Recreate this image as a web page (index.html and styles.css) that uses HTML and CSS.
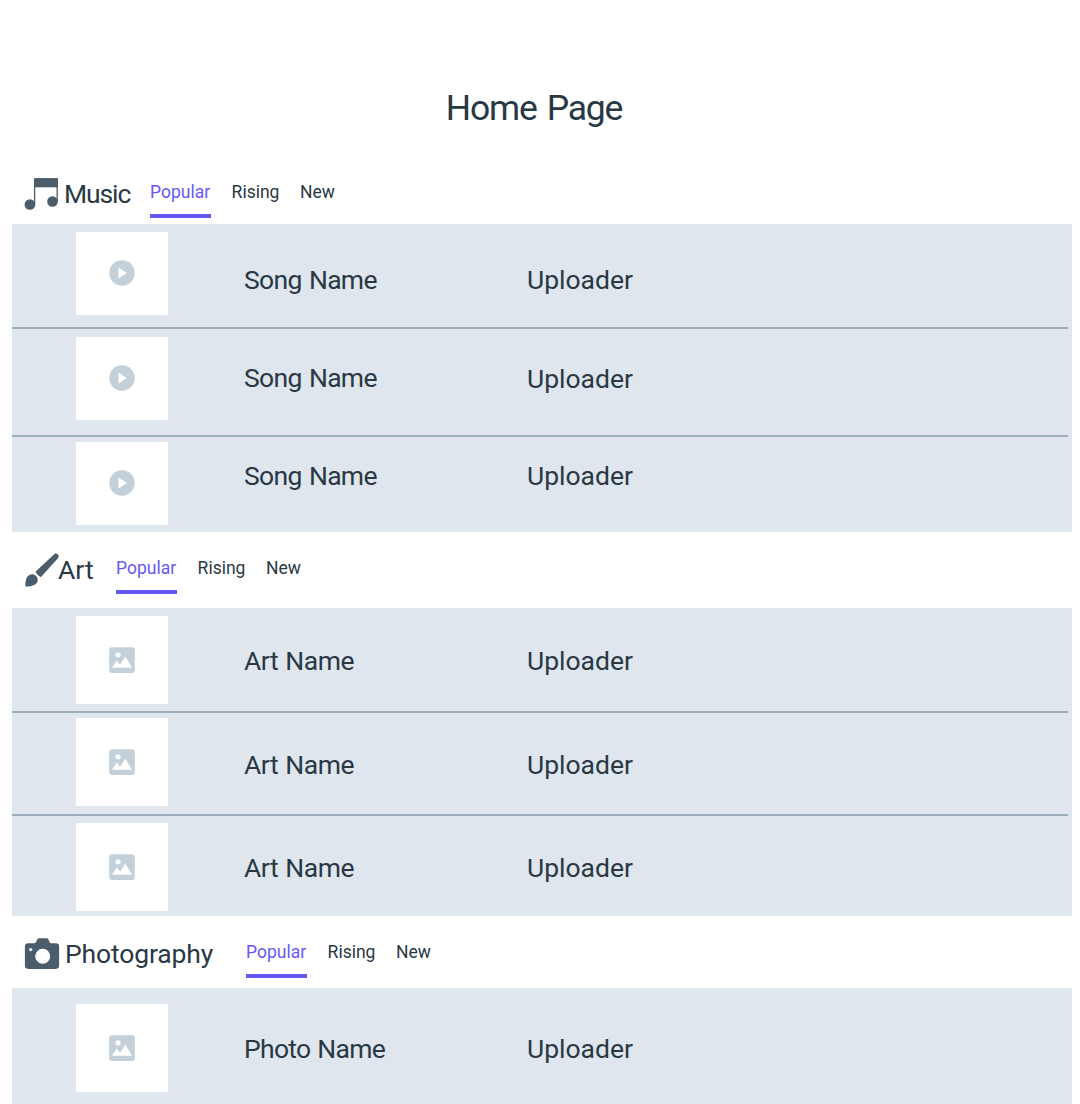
FILE: index.html
```
<!DOCTYPE html>
<html lang="en">
<head>
<meta charset="utf-8">
<title>Home Page</title>
<link rel="stylesheet" href="styles.css">
</head>
<body>
<svg class="sprite" width="0" height="0" aria-hidden="true">
  <symbol id="play" viewBox="0 0 26 26"><circle cx="13" cy="13" r="12.7" fill="#c3cfd9"/><path d="M9.5 7.6v10.8l8.3-5.4z" fill="#fff"/></symbol>
  <symbol id="image" viewBox="0 0 26 26"><rect x=".2" y=".2" width="25.6" height="25.8" rx="3" fill="#c3cfd9"/><circle cx="9" cy="7.8" r="2.6" fill="#fff"/><path d="M3 20.7l4.6-7.2 3.6 4.3 5.1-8.2 6.7 11.1z" fill="#fff"/></symbol>
</svg>
<main class="page">
  <h1 class="page-title">Home Page</h1>

  <section>
    <header class="head head-music">
      <svg class="head-icon" width="36" height="36" viewBox="0 0 36 36"><path d="M10.6 1.8H33.2V25M10.6 1.8V28" fill="none" stroke="#4b5c6b" stroke-width="1.3"/><path d="M10 1.3h23.8v9H10z"/><circle cx="5.9" cy="27.5" r="5.3"/><circle cx="28.5" cy="24.5" r="5.3"/></svg>
      <h2 class="head-title title-music">Music</h2>
      <nav class="tabs"><a class="tab active">Popular</a><a class="tab">Rising</a><a class="tab">New</a></nav>
    </header>
    <div class="list">
      <div class="row song-1"><span class="thumb"><svg width="26" height="26"><use href="#play"/></svg></span><span class="name song">Song Name</span><span class="uploader">Uploader</span></div>
      <div class="row song-2"><span class="thumb"><svg width="26" height="26"><use href="#play"/></svg></span><span class="name song">Song Name</span><span class="uploader">Uploader</span></div>
      <div class="row song-3"><span class="thumb"><svg width="26" height="26"><use href="#play"/></svg></span><span class="name song">Song Name</span><span class="uploader">Uploader</span></div>
    </div>
  </section>

  <section>
    <header class="head head-art">
      <svg class="head-icon" width="36" height="36" viewBox="0 0 36 36"><path d="M30.5.9c1.8-1.2 4.9.7 4 3.1-.3.9-.9 1.5-1.5 2.2L17.7 23.3c-.5.6-1 .9-1.6.5a13 13 0 0 1-4.2-4.3c-.4-.7 0-1.2.6-1.7z"/><path d="M1.3 33.6c.1-4.7.4-9.3 4-11.5 4-2.2 8.5.8 8.4 5-.3 4.8-5.3 6.5-12.4 6.5z"/></svg>
      <h2 class="head-title title-art">Art</h2>
      <nav class="tabs"><a class="tab active">Popular</a><a class="tab">Rising</a><a class="tab">New</a></nav>
    </header>
    <div class="list art">
      <div class="row art-1"><span class="thumb"><svg width="26" height="26"><use href="#image"/></svg></span><span class="name artwork">Art Name</span><span class="uploader">Uploader</span></div>
      <div class="row art-2"><span class="thumb"><svg width="26" height="26"><use href="#image"/></svg></span><span class="name artwork">Art Name</span><span class="uploader">Uploader</span></div>
      <div class="row art-3"><span class="thumb"><svg width="26" height="26"><use href="#image"/></svg></span><span class="name artwork">Art Name</span><span class="uploader">Uploader</span></div>
    </div>
  </section>

  <section>
    <header class="head head-photo">
      <svg class="head-icon" width="36" height="36" viewBox="0 0 36 36"><path fill-rule="evenodd" d="M4.2 6.3h6.5c1.6 0 2-4.2 3.7-5h8.8c1.7.8 2.1 5 3.7 5h4.9a3.3 3.3 0 0 1 3.3 3.3v19a3.3 3.3 0 0 1-3.3 3.3H4.2a3.3 3.3 0 0 1-3.3-3.3v-19a3.3 3.3 0 0 1 3.3-3.3zm14.5 5.4a7.5 7.5 0 1 0 0 15 7.5 7.5 0 0 0 0-15zM6.7 10.9a1.7 1.7 0 1 0 0 3.4 1.7 1.7 0 0 0 0-3.4z"/></svg>
      <h2 class="head-title title-photo">Photography</h2>
      <nav class="tabs"><a class="tab active">Popular</a><a class="tab">Rising</a><a class="tab">New</a></nav>
    </header>
    <div class="list art">
      <div class="row photo-1"><span class="thumb"><svg width="26" height="26"><use href="#image"/></svg></span><span class="name photo">Photo Name</span><span class="uploader">Uploader</span></div>
    </div>
  </section>
</main>
</body>
</html>
```
FILE: styles.css
```
* { box-sizing: border-box; }
body {
  margin: 0;
  background: #fff;
  color: #293845;
  font-family: Roboto, "Liberation Sans", sans-serif;
  font-size: 26.5px;
  line-height: 32px;
}
h1, h2 { margin: 0; font-weight: 400; }
.sprite { display: block; }
.page { padding: 0 8px 0 12px; }
.page-title {
  height: 164px;
  padding: 86px 16px 0 0;
  text-align: center;
  font-size: 35.5px;
  line-height: 44px;
  letter-spacing: -1.2px;
  word-spacing: 2.5px;
}

.head { display: flex; align-items: flex-start; padding-left: 12px; }
.head-music { height: 60px; padding-top: 13px; }
.head-art { height: 76px; padding-top: 21px; }
.head-photo { height: 72px; padding-top: 21px; }
.head-icon { flex: none; fill: #4b5c6b; }
.head-title { flex: none; font-size: 26.5px; white-space: nowrap; margin-top: 1px; }
.title-music { width: 86px; margin-left: 4px; letter-spacing: -1.1px; }
.title-art { width: 58px; margin-left: -2px; }
.title-photo { width: 181px; margin-left: 5px; letter-spacing: -.15px; }

.tabs { display: flex; gap: 20.6px; font-size: 17.5px; line-height: 26px; }
.tab { height: 41px; padding-top: 2px; white-space: nowrap; }
.tab.active { width: 61px; color: #6558f5; border-bottom: 4px solid #6558f5; }

.list { background: #dfe6ed; padding-right: 4px; }
.row {
  display: grid;
  grid-template-columns: 168px 283px 1fr;
  align-items: start;
  padding-left: 64px;
  white-space: nowrap;
}
.row + .row { border-top: 2px solid #9eadba; }
.thumb {
  display: flex;
  justify-content: center;
  align-items: center;
  width: 92px;
  height: 83px;
  padding: 0 2px 1px 0;
  background: #fff;
}
.art .thumb { height: 88px; }
.thumb svg { margin-right: -1px; }
.song { letter-spacing: -.7px; word-spacing: 1.5px; }
.artwork { letter-spacing: -.45px; word-spacing: 1px; }
.photo { letter-spacing: -.7px; word-spacing: 1px; }

.song-1 { height: 103px; }
.song-2 { height: 108px; }
.song-3 { height: 97px; }
.song-1 .thumb, .song-2 .thumb { margin-top: 8px; }
.song-3 .thumb { margin-top: 5px; }
.song-1 .name, .song-1 .uploader { margin-top: 40px; }
.song-2 .name { margin-top: 33px; }
.song-2 .uploader { margin-top: 34px; }
.song-3 .name, .song-3 .uploader { margin-top: 23px; }

.art-1 { height: 103px; }
.art-2 { height: 103px; }
.art-3 { height: 102px; }
.art-1 .thumb { margin-top: 8px; }
.art-2 .thumb { margin-top: 5px; }
.art-3 .thumb { margin-top: 7px; }
.art-1 .name, .art-1 .uploader { margin-top: 37px; }
.art-2 .name, .art-2 .uploader,
.art-3 .name, .art-3 .uploader { margin-top: 36px; }

.photo-1 { height: 116px; }
.photo-1 .thumb { margin-top: 16px; }
.photo-1 .name, .photo-1 .uploader { margin-top: 45px; }
```
